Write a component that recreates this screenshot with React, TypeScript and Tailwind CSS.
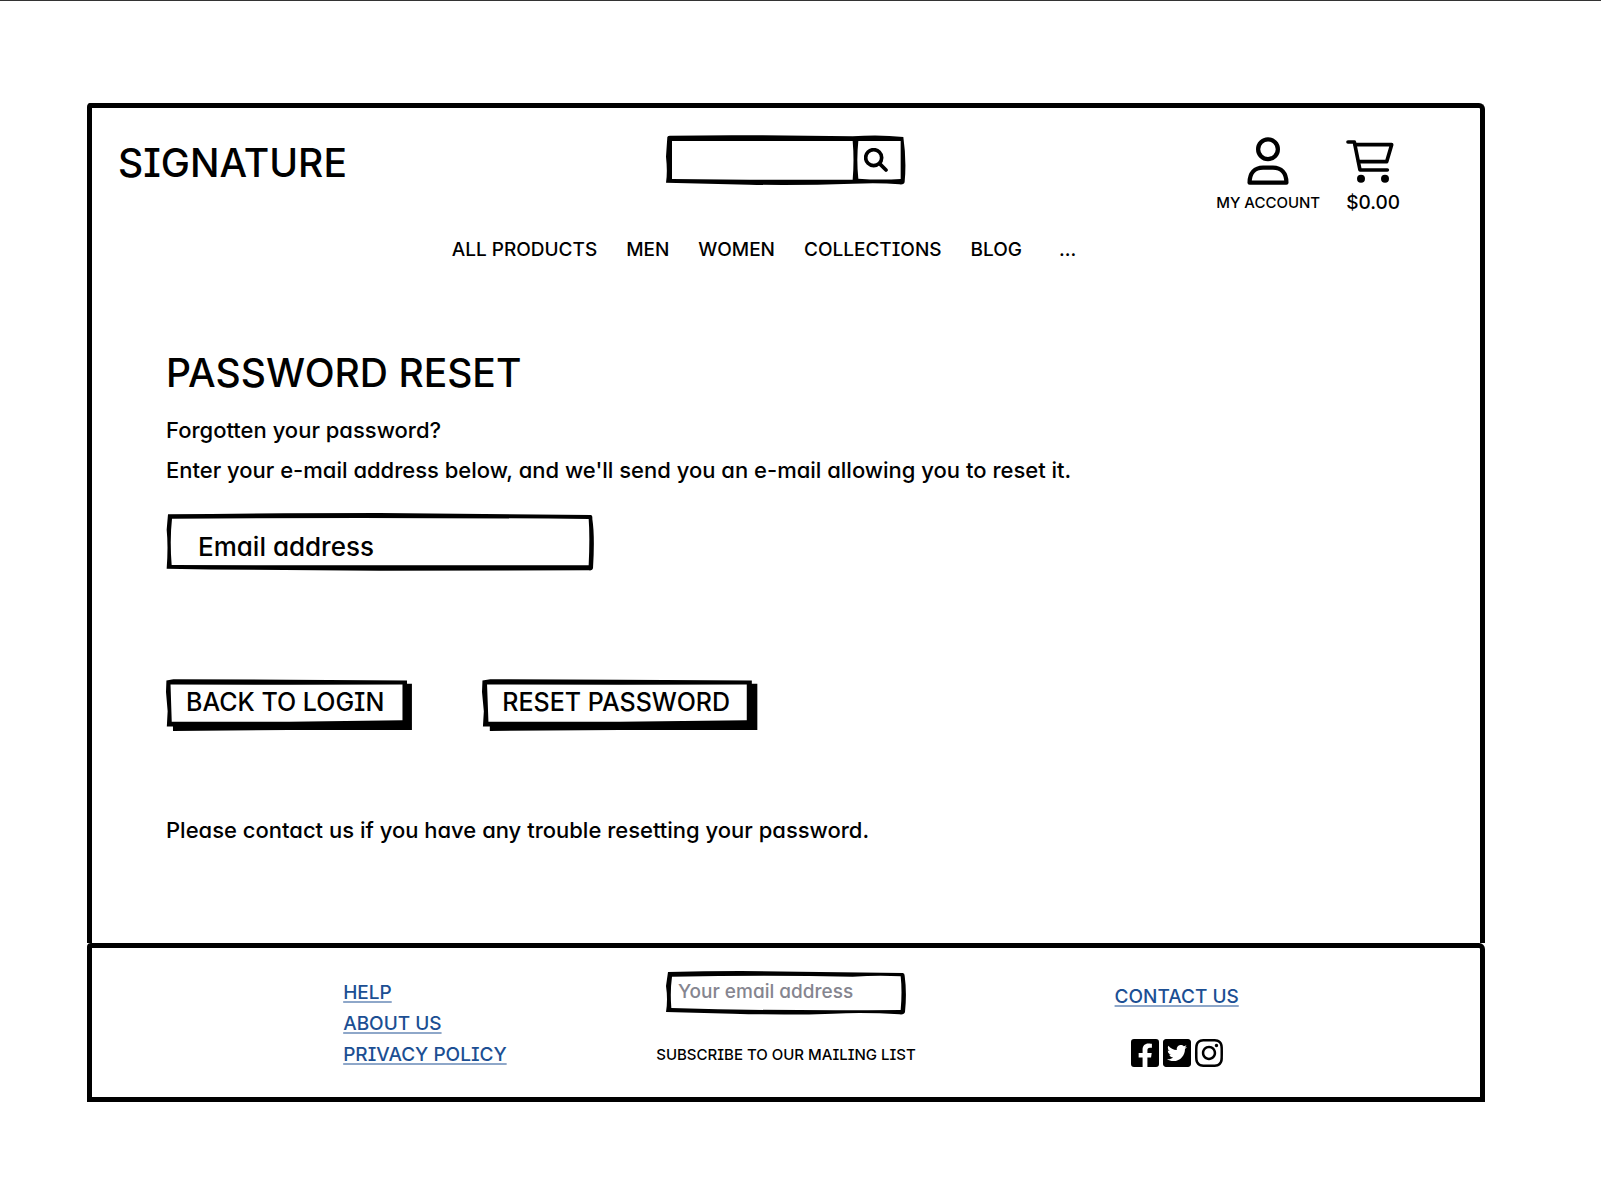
import { FaFacebookSquare, FaInstagram, FaTwitterSquare } from 'react-icons/fa';

const fontClasses =
  "font-['Inter','Liberation_Sans',sans-serif] font-medium [font-feature-settings:'cv11','cv08']";

const outlines = {
  search: {
    viewBox: '0 0 720 150',
    d: 'M4 6Q6 2 12 2Q150 0 290 1L560 4Q640 -2 712 6Q722 75 716 140Q715 150 700 148Q640 142 560 146Q400 152 250 149L0 143Q5 110 0 65ZM18 18V132L250 134H560Q565 75 560 18ZM577 18Q571 75 577 131Q640 136 704 132V18Z',
  },
  email: {
    viewBox: '0 0 1284 174',
    d: 'M6 4Q300 0 640 0L1274 6Q1280 6 1279 18Q1287 70 1281 166Q1280 174 1268 172L640 173Q300 172 2 167Q7 100 2 50ZM18 17Q11 80 17 156L640 157H1268Q1272 70 1268 18Q640 12 18 17Z',
  },
  newsletter: {
    viewBox: '0 0 720 131',
    d: 'M6 3Q200 -2 400 2L710 6Q716 6 716 14Q723 65 717 122Q715 131 700 129Q600 123 500 127Q360 132 200 127L0 122Q6 85 0 45ZM18 17Q12 60 16 110Q360 120 704 116Q709 60 704 16Q640 12 560 17Q300 12 18 17Z',
  },
  button: {
    viewBox: '0 0 600 161',
    d: 'M1 5L18 1L300 2L587 5V15H599V158H300L17 161V147H2L4 100L0 40ZM11 17L14 132H300L576 128V17L300 18Z',
  },
};

function Outline({ shape }: { shape: keyof typeof outlines }) {
  return (
    <svg
      aria-hidden="true"
      className="pointer-events-none absolute inset-0 h-full w-full"
      viewBox={outlines[shape].viewBox}
      preserveAspectRatio="none"
    >
      <path fillRule="evenodd" d={outlines[shape].d} />
    </svg>
  );
}

function AccountIcon() {
  return (
    <svg aria-hidden="true" className="h-12 w-[42px]" viewBox="0 0 126 146" fill="none" stroke="black" strokeWidth="13" strokeLinejoin="round">
      <circle cx="63" cy="37" r="30" />
      <path d="M7 139C7 109 23 93 48 93H78C103 93 119 109 119 139Z" />
    </svg>
  );
}

function CartIcon() {
  return (
    <svg aria-hidden="true" className="h-12 w-12" viewBox="0 0 144 144" fill="none" stroke="black" strokeWidth="11" strokeLinecap="round" strokeLinejoin="round">
      <path d="M6 15H25L42 99H124" />
      <path d="M28 23H137L122 74H38" />
      <circle cx="45" cy="125" r="12" fill="black" stroke="none" />
      <circle cx="117" cy="125" r="12" fill="black" stroke="none" />
    </svg>
  );
}

function SearchIcon() {
  return (
    <svg aria-hidden="true" className="h-6 w-6" viewBox="0 0 72 72" fill="none" stroke="black" strokeLinecap="round">
      <circle cx="29" cy="29" r="24" strokeWidth="11" />
      <path d="M49 49L66 66" strokeWidth="11" />
    </svg>
  );
}

function SketchButton({ label }: { label: string }) {
  return (
    <button type="button" className="relative h-[52px] pr-7 pb-1 pl-5 text-[25px]">
      <Outline shape="button" />
      {label}
    </button>
  );
}

const linkClasses =
  'text-[#1c4f93] underline decoration-[#8ea7c9] decoration-2 underline-offset-2 [text-decoration-skip-ink:none]';

export default function App() {
  return (
    <div className={`min-h-screen border-t border-[#333] bg-white pr-[116px] pb-[80px] pl-[87px] pt-[102px] text-black ${fontClasses}`}>
      <div className="rounded-tl-sm rounded-tr-md border-x-5 border-t-5 border-black">
        <header className="pt-[27px]">
          <div className="grid grid-cols-3 items-start">
            <a href="#home" className="pt-1 pl-[26px] text-[39px] leading-[48px]">
              SIGNATURE
            </a>
            <form role="search" className="relative flex h-[50px] w-60 justify-self-center">
              <Outline shape="search" />
              <input type="search" aria-label="Search products" className="min-w-0 flex-1 px-4 text-xl outline-none" />
              <button type="button" aria-label="Search" className="flex w-13 items-center pl-2.5">
                <SearchIcon />
              </button>
            </form>
            <div className="flex justify-end gap-[26px] pr-20">
              <a href="#account" className="flex flex-col items-center pt-0.5">
                <AccountIcon />
                <span className="mt-1.5 text-[15px] leading-6">MY ACCOUNT</span>
              </a>
              <a href="#cart" className="flex flex-col items-start pt-0.5">
                <CartIcon />
                <span className="mt-1.5 text-[19px] leading-6">$0.00</span>
              </a>
            </div>
          </div>
          <nav aria-label="Main" className="mt-[21px] flex justify-center gap-[29px] pr-11 text-[19px] leading-7">
            <a href="#products">ALL PRODUCTS</a>
            <a href="#men">MEN</a>
            <a href="#women">WOMEN</a>
            <a href="#collections">COLLECTIONS</a>
            <a href="#blog">BLOG</a>
            <a href="#more" className="pl-2">...</a>
          </nav>
        </header>

        <main className="px-[74px] pt-[85px] pb-[93px]">
          <h1 className="text-[39px] leading-[48px]">PASSWORD RESET</h1>
          <div className="mt-[13px] text-[22px] leading-10">
            <p>Forgotten your password?</p>
            <p>Enter your e-mail address below, and we'll send you an e-mail allowing you to reset it.</p>
          </div>
          <div className="relative mt-[23px] h-[58px] w-[428px] max-w-full">
            <Outline shape="email" />
            <input
              type="email"
              aria-label="Email address"
              placeholder="Email address"
              className="h-full w-full px-8 pt-2 text-[26px] outline-none placeholder:text-black"
            />
          </div>
          <div className="mt-[108px] flex flex-wrap gap-[70px]">
            <SketchButton label="BACK TO LOGIN" />
            <SketchButton label="RESET PASSWORD" />
          </div>
          <p className="mt-[79px] text-[22px] leading-10">
            Please contact us if you have any trouble resetting your password.
          </p>
        </main>
      </div>

      <footer className="grid grid-cols-3 items-start rounded-tl-sm rounded-tr-md border-5 border-black pt-[23px] pb-[27px] text-[19px]">
        <ul className="justify-self-end pt-1.5 pr-[48px] leading-[31px]">
          <li><a href="#help" className={linkClasses}>HELP</a></li>
          <li><a href="#about" className={linkClasses}>ABOUT US</a></li>
          <li><a href="#privacy" className={linkClasses}>PRIVACY POLICY</a></li>
        </ul>
        <div className="flex flex-col items-center">
          <div className="relative h-11 w-60">
            <Outline shape="newsletter" />
            <input
              id="newsletter"
              type="email"
              placeholder="Your email address"
              className="h-full w-full px-3 pb-1 outline-none placeholder:text-[#85858f]"
            />
          </div>
          <label htmlFor="newsletter" className="mt-7 text-[15px] leading-6">
            SUBSCRIBE TO OUR MAILING LIST
          </label>
        </div>
        <div className="flex flex-col items-center gap-[26px] pt-3 pr-[144px]">
          <a href="#contact" className={`leading-7 ${linkClasses}`}>CONTACT US</a>
          <div className="flex">
            <a href="#facebook" aria-label="Facebook"><FaFacebookSquare className="size-8" /></a>
            <a href="#twitter" aria-label="Twitter"><FaTwitterSquare className="size-8" /></a>
            <a href="#instagram" aria-label="Instagram"><FaInstagram className="size-8" /></a>
          </div>
        </div>
      </footer>
    </div>
  );
}
